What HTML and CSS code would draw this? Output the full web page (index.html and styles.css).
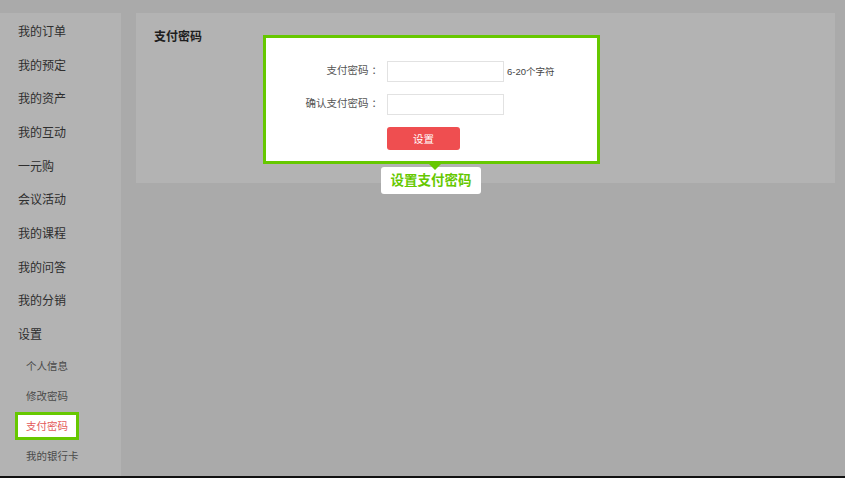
FILE: index.html
```html
<!DOCTYPE html>
<html lang="zh-CN">
<head>
 <meta charset="UTF-8">
 <title>支付密码</title>
 <link rel="stylesheet" href="styles.css">
</head>
<body>
 <div class="page">
 <div class="sidebar">
 <div class="nav-item">我的订单</div>
 <div class="nav-item">我的预定</div>
 <div class="nav-item">我的资产</div>
 <div class="nav-item">我的互动</div>
 <div class="nav-item">一元购</div>
 <div class="nav-item">会议活动</div>
 <div class="nav-item">我的课程</div>
 <div class="nav-item">我的问答</div>
 <div class="nav-item">我的分销</div>
 <div class="nav-item">设置</div>
 <div class="sub-list">
 <div class="sub-item">个人信息</div>
 <div class="sub-item">修改密码</div>
 <div class="sub-item current"><span class="guide-mark">支付密码</span></div>
 <div class="sub-item">我的银行卡</div>
 </div>
 </div>
 <div class="content">
 <h2 class="title">支付密码</h2>
 <div class="guide-box">
 <div class="form">
 <div class="form-row">
 <label class="form-label">支付密码 ：</label>
 <input class="form-input" type="password">
 <span class="form-hint">6-20个字符</span>
 </div>
 <div class="form-row">
 <label class="form-label">确认支付密码 ：</label>
 <input class="form-input" type="password">
 </div>
 <div class="form-row">
 <span class="form-label"></span>
 <button class="submit-btn">设置</button>
 </div>
 </div>
 <div class="guide-arrow"></div>
 <div class="guide-tip">设置支付密码</div>
 </div>
 </div>
 </div>
 <div class="bottom-bar"></div>
</body>
</html>
```

FILE: styles.css
```css
* {
margin: 0;
padding: 0;
box-sizing: border-box;
font-family: "Liberation Sans", "Noto Sans CJK SC", sans-serif;
}

body {
background: #aaaaaa;
width: 845px;
height: 478px;
overflow: hidden;
}

.page {
display: flex;
gap: 15px;
padding-top: 13px;
height: 476px;
}

.sidebar {
width: 121px;
background: #b3b3b3;
padding-top: 3px;
}

.nav-item {
height: 33.67px;
line-height: 33.67px;
padding-left: 18px;
font-size: 12px;
color: #2e2e2e;
}

.sub-list {
margin-top: -2px;
}

.sub-item {
height: 30px;
line-height: 30px;
padding-left: 26px;
font-size: 10.5px;
color: #4a4a4a;
}

.sub-item.current {
padding-left: 15px;
display: flex;
align-items: center;
}

.guide-mark {
display: block;
width: 64px;
height: 28px;
line-height: 22px;
padding-left: 8px;
background: #ffffff;
border: 3px solid #66c800;
color: #e35a5a;
}

.content {
position: relative;
width: 699px;
height: 170px;
background: #b3b3b3;
}

.title {
padding: 14px 0 0 18px;
font-size: 12px;
line-height: 20px;
font-weight: bold;
color: #1e1e1e;
}

.guide-box {
position: absolute;
left: 127px;
top: 22px;
width: 337px;
height: 129px;
background: #ffffff;
border: 3px solid #66c800;
}

.form {
padding-top: 23px;
display: flex;
flex-direction: column;
gap: 12px;
}

.form-row {
display: flex;
align-items: center;
}

.form-label {
width: 116px;
margin-right: 5px;
margin-bottom: 5px;
text-align: right;
font-size: 10.5px;
color: #555555;
}

.form-input {
width: 117px;
height: 21px;
border: 1px solid #e2e2e2;
outline: none;
}

.form-hint {
margin-left: 3px;
margin-bottom: 2px;
font-size: 9.5px;
color: #444444;
}

.submit-btn {
width: 73px;
height: 23px;
border: none;
border-radius: 3px;
background: #ef4e50;
color: #ffffff;
font-size: 10.5px;
}

.guide-arrow {
position: absolute;
left: 163px;
top: 126px;
width: 0;
height: 0;
border-left: 6px solid transparent;
border-right: 6px solid transparent;
border-top: 6px solid #66c800;
z-index: 2;
}

.guide-tip {
position: absolute;
left: 115px;
top: 129px;
width: 100px;
height: 27px;
line-height: 27px;
background: #ffffff;
border-radius: 3px;
text-align: center;
font-size: 13.5px;
font-weight: bold;
color: #66c800;
}

.bottom-bar {
height: 2px;
background: #111111;
}
```
